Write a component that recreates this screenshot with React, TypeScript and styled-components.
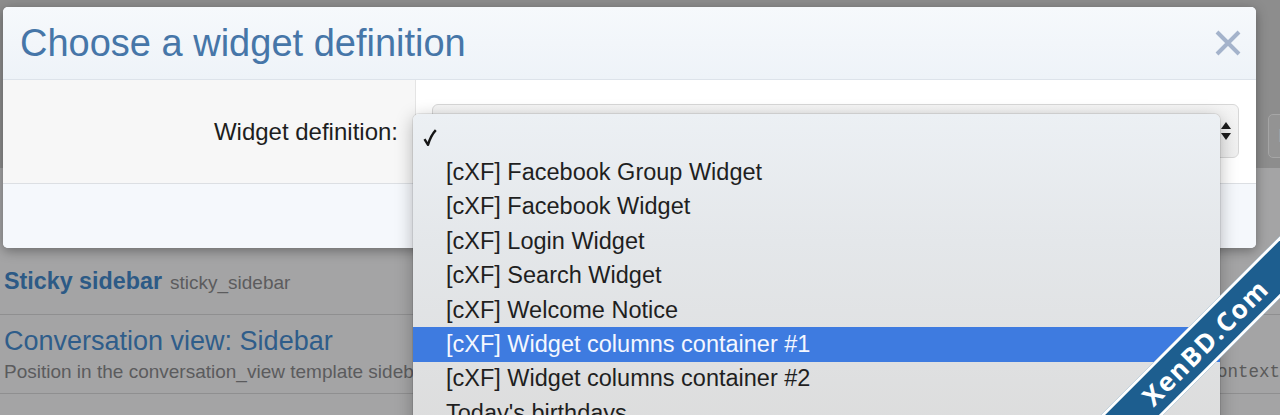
import React from "react";
import styled, { createGlobalStyle } from "styled-components";

const GlobalStyle = createGlobalStyle`
  html, body { margin: 0; padding: 0; }
  body {
    width: 1280px;
    height: 415px;
    overflow: hidden;
    font-family: "Liberation Sans", Arial, Helvetica, sans-serif;
  }
`;

const Stage = styled.div`
  position: relative;
  width: 1280px;
  height: 415px;
  overflow: hidden;
  background: #a4a4a5;
`;

/* ---------- dimmed page behind the overlay ---------- */
const PageTop = styled.div`
  height: 168px;
  box-sizing: border-box;
  padding-top: 114px;
  background: #8d8d8d;
  display: flex;
  justify-content: flex-end;
  align-items: flex-start;
`;

const GhostButton = styled.div`
  width: 40px;
  height: 44px;
  margin-right: -28px;
  box-sizing: border-box;
  border: 1px solid #a6a6a6;
  border-radius: 5px;
  background: #939393;
  color: #a9a9a9;
  font-size: 18px;
  display: flex;
  align-items: center;
  padding-left: 9px;
`;

const PageList = styled.div`
  padding-top: 87px;
`;

const ListRow = styled.div<{ $pt: number; $pb: number }>`
  padding: ${(p) => p.$pt}px 0 ${(p) => p.$pb}px 4px;
  border-bottom: 1px solid #8f8f90;
`;

const RowHead = styled.div`
  display: flex;
  align-items: baseline;
  gap: 8px;
  line-height: 28px;
`;

const StrongTitle = styled.span`
  font-size: 23.3px;
  font-weight: 700;
  color: #2c5a86;
`;

const Code = styled.span`
  font-size: 19px;
  color: #5c5c5e;
`;

const BigTitle = styled.div`
  font-size: 27px;
  line-height: 32px;
  color: #2f5d8a;
`;

const DescLine = styled.div`
  margin-top: 4px;
  line-height: 22px;
  display: flex;
  justify-content: space-between;
  white-space: nowrap;
`;

const Desc = styled.span`
  font-size: 19px;
  color: #5b5b5d;
`;

const Mono = styled.span`
  font-family: "Liberation Mono", "Courier New", monospace;
  font-size: 17.5px;
  color: #5a5a5a;
`;

/* ---------- modal ---------- */
const Modal = styled.div`
  position: absolute;
  left: 3px;
  top: 7px;
  width: 1253px;
  height: 241px;
  border-radius: 5px;
  overflow: hidden;
  background: #f5f8fc;
  box-shadow: 0 3px 12px rgba(0, 0, 0, 0.35);
  display: flex;
  flex-direction: column;
`;

const ModalHeader = styled.div`
  height: 72px;
  border-bottom: 1px solid #dde3ea;
  background: linear-gradient(#f6f9fc, #eef3f8);
  display: flex;
  align-items: center;
  justify-content: space-between;
  padding: 0 15px 0 17px;
`;

const Title = styled.h1`
  margin: 0;
  font-weight: 400;
  font-size: 38px;
  color: #4676a8;
`;

const CloseButton = styled.button`
  border: 0;
  background: transparent;
  padding: 0;
  width: 26px;
  height: 26px;
  display: flex;
  cursor: pointer;
`;

const FormRow = styled.div`
  height: 103px;
  display: flex;
  background: #ffffff;
  border-bottom: 1px solid #dcdfe3;
`;

const LabelCell = styled.div`
  width: 413px;
  box-sizing: border-box;
  background: #f7f7f7;
  border-right: 1px solid #e4e4e4;
  display: flex;
  align-items: center;
  justify-content: flex-end;
  padding-right: 17px;
  font-size: 24px;
  color: #1e1e1e;
`;

const InputCell = styled.div`
  flex: 1;
  padding: 24px 17px 25px 16px;
  display: flex;
`;

const SelectBox = styled.div`
  flex: 1;
  border: 1px solid #d7d7d7;
  border-radius: 6px;
  background: linear-gradient(#f5f5f5, #efefef);
  display: flex;
  align-items: center;
  justify-content: flex-end;
  padding-right: 7px;
`;

const ModalFooter = styled.div`
  flex: 1;
  background: #f5f8fc;
`;

/* ---------- native select popup ---------- */
const Menu = styled.ul`
  position: absolute;
  left: 413px;
  top: 114px;
  width: 807px;
  height: 320px;
  margin: 0;
  padding: 7px 0 0;
  list-style: none;
  box-sizing: border-box;
  border-radius: 6px 6px 0 0;
  background: linear-gradient(#ecf0f4 0%, #e4e7ea 40%, #dcdcdc 100%);
  box-shadow: 0 4px 18px rgba(0, 0, 0, 0.28), 0 0 0 1px rgba(0, 0, 0, 0.08);
`;

const MenuItem = styled.li<{ $active?: boolean }>`
  height: 34.4px;
  display: flex;
  align-items: center;
  padding-left: 10px;
  font-size: 23.5px;
  white-space: nowrap;
  color: ${(p) => (p.$active ? "#f4f7ff" : "#1f1f1f")};
  background: ${(p) => (p.$active ? "#3e7be0" : "transparent")};
`;

const CheckSlot = styled.span`
  width: 23px;
  display: flex;
  align-items: center;
`;

/* ---------- watermark ---------- */
const Watermark = styled.div`
  position: absolute;
  left: 985px;
  top: 320px;
  width: 440px;
  height: 38px;
  border-top: 3px solid #ffffff;
  border-bottom: 3px solid #ffffff;
  background: #1d5e8f;
  transform: rotate(-45deg);
  display: flex;
  align-items: center;
  justify-content: center;
  color: #ffffff;
  font-family: "Open Sans", "DejaVu Sans", sans-serif;
  font-weight: 700;
  font-size: 26px;
  letter-spacing: 1.5px;
`;

const items = [
  "[cXF] Facebook Group Widget",
  "[cXF] Facebook Widget",
  "[cXF] Login Widget",
  "[cXF] Search Widget",
  "[cXF] Welcome Notice",
  "[cXF] Widget columns container #1",
  "[cXF] Widget columns container #2",
  "Today's birthdays",
];

const SelectArrows = () => (
  <svg width="10" height="18" viewBox="0 0 10 18">
    <polygon points="0,7 5,0 10,7" fill="#1c1c1c" />
    <polygon points="0,11 10,11 5,18" fill="#1c1c1c" />
  </svg>
);

const CloseIcon = () => (
  <svg width="26" height="26" viewBox="0 0 26 26">
    <path d="M2 2 L24 24 M24 2 L2 24" stroke="#a4b3cb" strokeWidth="4" />
  </svg>
);

const CheckIcon = () => (
  <svg width="14" height="18" viewBox="0 0 14 18">
    <path
      d="M1.5 10.2 L5 15.8 C6.8 10 9.2 5 12.8 1.2"
      stroke="#161616"
      strokeWidth="2.4"
      fill="none"
      strokeLinejoin="round"
    />
  </svg>
);

export default function App() {
  return (
    <>
      <GlobalStyle />
      <Stage>
        <PageTop>
          <GhostButton>F</GhostButton>
        </PageTop>
        <PageList>
          <ListRow $pt={12} $pb={17}>
            <RowHead>
              <StrongTitle>Sticky sidebar</StrongTitle>
              <Code>sticky_sidebar</Code>
            </RowHead>
          </ListRow>
          <ListRow $pt={10} $pb={10}>
            <BigTitle>Conversation view: Sidebar</BigTitle>
            <DescLine>
              <Desc>Position in the conversation_view template sidebar.</Desc>
              <Mono>context</Mono>
            </DescLine>
          </ListRow>
        </PageList>

        <Modal>
          <ModalHeader>
            <Title>Choose a widget definition</Title>
            <CloseButton aria-label="Close">
              <CloseIcon />
            </CloseButton>
          </ModalHeader>
          <FormRow>
            <LabelCell>Widget definition:</LabelCell>
            <InputCell>
              <SelectBox>
                <SelectArrows />
              </SelectBox>
            </InputCell>
          </FormRow>
          <ModalFooter />
        </Modal>

        <Menu>
          <MenuItem>
            <CheckSlot>
              <CheckIcon />
            </CheckSlot>
          </MenuItem>
          {items.map((t) => (
            <MenuItem key={t} $active={t.endsWith("#1")}>
              <CheckSlot />
              {t}
            </MenuItem>
          ))}
        </Menu>

        <Watermark>XenBD.Com</Watermark>
      </Stage>
    </>
  );
}
